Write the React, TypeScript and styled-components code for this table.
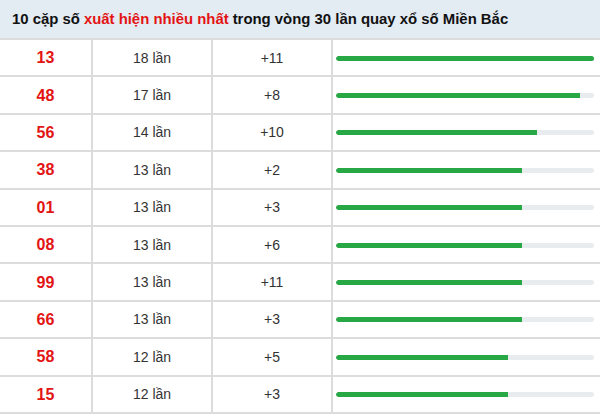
import React from 'react';
import styled, { createGlobalStyle } from 'styled-components';

const GlobalStyle = createGlobalStyle`
  html, body { margin: 0; padding: 0; background: #fff; }
  body { font-family: "Liberation Sans", Arial, sans-serif; }
`;

const Wrap = styled.div`
  width: 600px;
`;

const Header = styled.div`
  height: 38px;
  background: #e3ebf3;
  border-bottom: 2px solid #dcdcdc;
  padding-left: 12px;
  display: flex;
  align-items: center;
  font-size: 14.9px;
  font-weight: bold;
  color: #111;
`;

const Hot = styled.span`
  color: #e31414;
  margin: 0 4px;
`;

const Row = styled.div`
  display: grid;
  grid-template-columns: 93px 120px 120px 1fr;
  height: 35.4px;
  border-bottom: 2px solid #dcdcdc;
`;

const Cell = styled.div`
  display: flex;
  align-items: center;
  justify-content: center;
  border-right: 2px solid #dcdcdc;
  font-size: 14px;
  color: #333;
  &:last-child { border-right: none; }
`;

const Pair = styled(Cell)`
  font-size: 16px;
  font-weight: bold;
  color: #e31414;
  padding-top: 1px;
`;

const BarCell = styled(Cell)`
  justify-content: flex-start;
  padding: 1px 6px 0 3px;
`;

const Track = styled.div`
  width: 258px;
  height: 5px;
  border-radius: 3px;
  background: #e9ecef;
  overflow: hidden;
`;

const Fill = styled.div`
  height: 100%;
  background: #28a745;
  border-radius: 3px 0 0 3px;
`;

const rows = [
  { num: '13', times: 18, diff: '+11' },
  { num: '48', times: 17, diff: '+8' },
  { num: '56', times: 14, diff: '+10' },
  { num: '38', times: 13, diff: '+2' },
  { num: '01', times: 13, diff: '+3' },
  { num: '08', times: 13, diff: '+6' },
  { num: '99', times: 13, diff: '+11' },
  { num: '66', times: 13, diff: '+3' },
  { num: '58', times: 12, diff: '+5' },
  { num: '15', times: 12, diff: '+3' },
];

const max = 18;

const App = () => (
  <Wrap>
    <GlobalStyle />
    <Header>
      10 cặp số<Hot>xuất hiện nhiều nhất</Hot>trong vòng 30 lần quay xổ số Miền Bắc
    </Header>
    {rows.map((r) => (
      <Row key={r.num}>
        <Pair>{r.num}</Pair>
        <Cell>{r.times} lần</Cell>
        <Cell>{r.diff}</Cell>
        <BarCell>
          <Track>
            <Fill style={{ width: `${(r.times / max) * 100}%` }} />
          </Track>
        </BarCell>
      </Row>
    ))}
  </Wrap>
);

export default App;
